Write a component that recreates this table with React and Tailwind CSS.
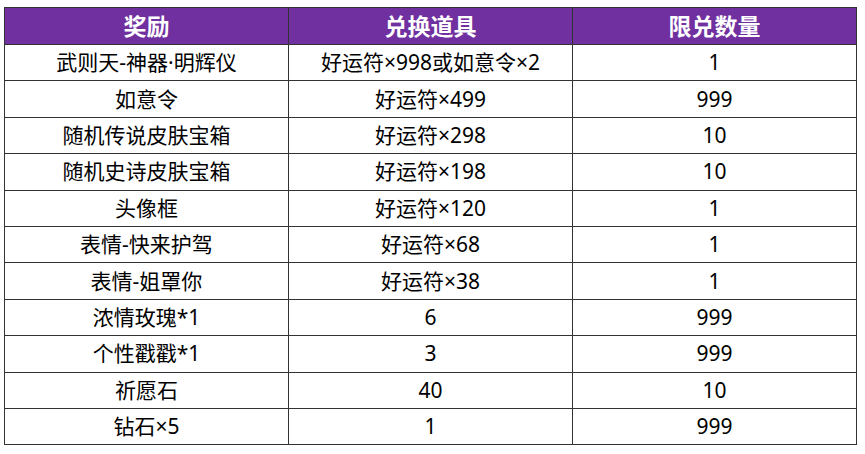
import React from 'react';

const rows = [
  ['武则天-神器·明辉仪', '好运符×998或如意令×2', '1'],
  ['如意令', '好运符×499', '999'],
  ['随机传说皮肤宝箱', '好运符×298', '10'],
  ['随机史诗皮肤宝箱', '好运符×198', '10'],
  ['头像框', '好运符×120', '1'],
  ['表情-快来护驾', '好运符×68', '1'],
  ['表情-姐罩你', '好运符×38', '1'],
  ['浓情玫瑰*1', '6', '999'],
  ['个性戳戳*1', '3', '999'],
  ['祈愿石', '40', '10'],
  ['钻石×5', '1', '999'],
];

// latin glyphs (digits, ×, ·) from Noto Sans, CJK from Noto Sans CJK
const font = { fontFamily: '"Noto Sans", "Noto Sans CJK SC", sans-serif' };

export default function App() {
  return (
    <div className="w-[865px] h-[454px] bg-white pt-[7px] pl-[4px]" style={font}>
      <table className="w-[853px] border-collapse table-fixed">
        <thead>
          <tr className="h-[37px] bg-[#7030a0]">
            {['奖励', '兑换道具', '限兑数量'].map((h) => (
              <th key={h} className="border border-[#333] p-0 text-[23px] font-bold text-white leading-none">
                {h}
              </th>
            ))}
          </tr>
        </thead>
        <tbody>
          {rows.map((r, i) => (
            <tr key={i} className="h-[36.4px]">
              {r.map((c, j) => (
                <td key={j} className="border border-[#333] p-0 text-center text-[21px] text-black leading-none">
                  {c}
                </td>
              ))}
            </tr>
          ))}
        </tbody>
      </table>
    </div>
  );
}
